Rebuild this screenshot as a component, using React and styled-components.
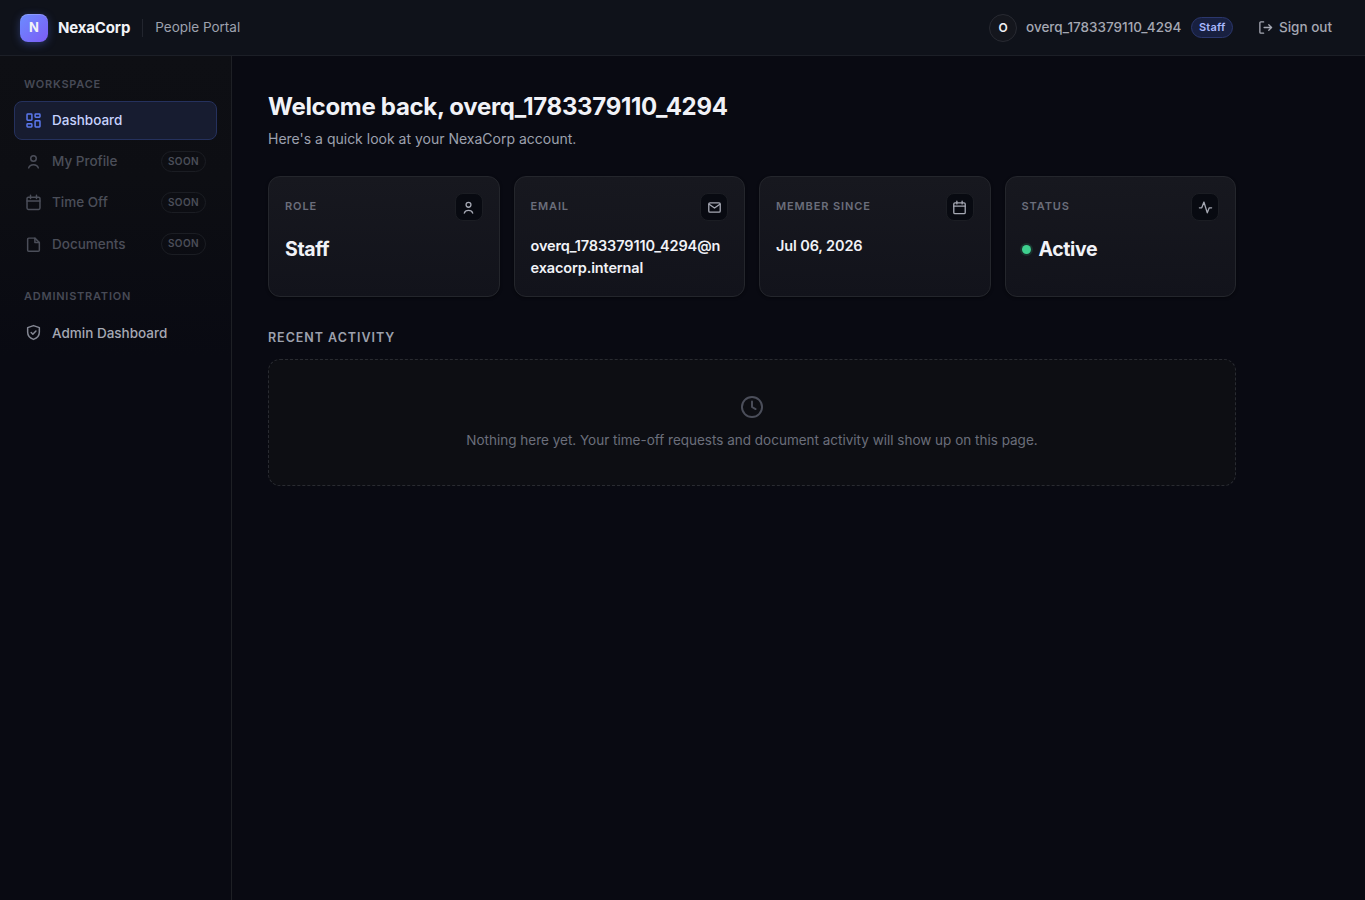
import React from 'react';
import styled, { createGlobalStyle, css } from 'styled-components';

const GlobalStyle = createGlobalStyle`
  * {
    box-sizing: border-box;
  }

  body {
    margin: 0;
    background: #090a12;
    color: #f1f2f7;
    font-family: Inter, 'Liberation Sans', sans-serif;
    font-size: 13.5px;
    line-height: 1.5;
    -webkit-font-smoothing: antialiased;
  }
`;

const Page = styled.div`
  display: flex;
  flex-direction: column;
  min-height: 100vh;
`;

const Topbar = styled.header`
  display: flex;
  align-items: center;
  justify-content: space-between;
  height: 56px;
  padding: 0 20px;
  background: #0f121a;
  border-bottom: 1px solid #1c1f27;
`;

const Brand = styled.div`
  display: flex;
  align-items: center;
  gap: 10px;
`;

const Logo = styled.div`
  display: flex;
  align-items: center;
  justify-content: center;
  width: 28px;
  height: 28px;
  border-radius: 8px;
  background: linear-gradient(135deg, #6b8cff, #7c5cf5);
  box-shadow: 0 2px 8px rgba(91, 124, 250, 0.35), inset 0 1px 0 rgba(255, 255, 255, 0.2);
  font-size: 13px;
  font-weight: 700;
`;

const BrandName = styled.span`
  padding-top: 1px;
  font-size: 15px;
  font-weight: 700;
  letter-spacing: -0.15px;
`;

const BrandSection = styled.span`
  margin-left: 2px;
  padding: 0 0 2px 12px;
  border-left: 1px solid #22252e;
  line-height: 16px;
  color: #9da1ae;
`;

const UserArea = styled.div`
  display: flex;
  align-items: center;
  gap: 10px;
  color: #a5a8b3;
`;

const Avatar = styled.div`
  display: flex;
  align-items: center;
  justify-content: center;
  width: 28px;
  height: 28px;
  margin-right: -1px;
  border: 1px solid #282a32;
  border-radius: 50%;
  background: #14161d;
  color: #f1f2f7;
  font-size: 12px;
  font-weight: 600;
`;

const UserName = styled.span`
  font-weight: 500;
`;

const RoleBadge = styled.span`
  padding: 2px 6.5px;
  border: 1px solid #2b376e;
  border-radius: 999px;
  background: #182040;
  color: #a9b8ff;
  font-size: 11px;
  font-weight: 600;
  line-height: 15px;
  letter-spacing: 0.2px;
`;

const SignOut = styled.a`
  display: flex;
  align-items: center;
  gap: 6px;
  margin-left: 2px;
  padding: 6px 12px;
  border: 1px solid transparent;
  font-weight: 500;
`;

const Body = styled.div`
  display: flex;
  flex: 1;
`;

const Sidebar = styled.nav`
  flex: none;
  width: 232px;
  padding: 20px 14px;
  border-right: 1px solid #1e2025;
  background: linear-gradient(180deg, #0e0f14 0, #0d0e13 120px, #090a12 300px);
`;

const NavLabel = styled.div`
  padding: 0 10px;
  margin: ${props => (props.$spaced ? '24px 0 9px' : '0 0 8px')};
  color: #474a56;
  font-size: 11px;
  font-weight: 600;
  letter-spacing: 0.77px;
`;

const NavList = styled.div`
  display: flex;
  flex-direction: column;
  gap: 2px;
`;

const NavItem = styled.a`
  display: flex;
  align-items: center;
  gap: 10px;
  min-height: 39px;
  padding: 8px 10px;
  border: 1px solid transparent;
  border-radius: 8px;
  color: #a5a8b3;
  font-weight: 500;

  svg {
    color: #858894;
  }

  ${props => props.$active && css`
    background: #171c30;
    border-color: #25315d;
    color: #c7d2fe;

    svg {
      color: #5b78ee;
    }
  `}

  ${props => props.$disabled && css`
    color: #4b4e59;

    svg {
      color: #4b4e59;
    }
  `}
`;

const SoonTag = styled.span`
  margin-left: auto;
  padding: 2px 6px;
  border: 1px solid #1b1d23;
  border-radius: 999px;
  font-size: 10px;
  font-weight: 600;
  line-height: 15.4px;
  letter-spacing: 0.4px;
`;

const Main = styled.main`
  flex: 1;
  max-width: 1040px;
  padding: 33px 36px;
`;

const Title = styled.h1`
  margin: 0 0 3px;
  font-size: 24px;
  font-weight: 700;
  line-height: 36px;
  letter-spacing: -0.3px;
`;

const Subtitle = styled.p`
  margin: 0 0 26px;
  color: #9da1ae;
  font-size: 14px;
  line-height: 22px;
`;

const Cards = styled.div`
  display: grid;
  grid-template-columns: repeat(4, 1fr);
  gap: 14px;
`;

const Card = styled.section`
  min-height: 121px;
  padding: 16px;
  border: 1px solid #24262c;
  border-radius: 12px;
  background: linear-gradient(180deg, #17181f, #12131b);
  box-shadow: 0 1px 3px rgba(0, 0, 0, 0.4);
`;

const CardHead = styled.div`
  display: flex;
  align-items: center;
  justify-content: space-between;
  margin-bottom: 14px;
`;

const CardLabel = styled.span`
  padding-bottom: 1px;
  color: #6b6e7b;
  font-size: 11px;
  font-weight: 600;
  letter-spacing: 0.88px;
`;

const IconBox = styled.span`
  display: flex;
  align-items: center;
  justify-content: center;
  width: 28px;
  height: 28px;
  border: 1px solid #1b1d23;
  border-radius: 8px;
  background: #080a11;
  color: #a5a8b3;
`;

const CardValue = styled.div`
  display: flex;
  align-items: center;
  gap: 8px;
  font-size: ${props => (props.$small ? '14.5px' : '19.5px')};
  font-weight: ${props => (props.$small ? 600 : 700)};
  line-height: ${props => (props.$small ? '22px' : '28px')};
  letter-spacing: ${props => (props.$small ? '-0.13px' : '-0.39px')};
  word-break: break-all;
`;

const StatusDot = styled.span`
  width: 9px;
  height: 9px;
  border-radius: 50%;
  background: #3ecf8e;
  box-shadow: 0 0 0 2px rgba(62, 207, 142, 0.15);
`;

const SectionTitle = styled.h2`
  margin: 31px 0 11px;
  color: #9da1ae;
  font-size: 12.5px;
  font-weight: 600;
  line-height: 20px;
  letter-spacing: 0.96px;
`;

const EmptyState = styled.div`
  display: flex;
  flex-direction: column;
  align-items: center;
  gap: 11px;
  height: 127px;
  padding-top: 35px;
  border: 1px dashed #292b31;
  border-radius: 12px;
  background: #0d0e13;
  color: #6b6e7b;

  svg {
    color: #4b4e5a;
  }
`;

const iconPaths = {
  dashboard: (
    <>
      <rect x="1.9" y="1.9" width="4.6" height="5.8" rx="0.7" />
      <rect x="9.5" y="1.9" width="4.6" height="3.1" rx="0.7" />
      <rect x="9.5" y="8.3" width="4.6" height="5.8" rx="0.7" />
      <rect x="1.9" y="11" width="4.6" height="3.1" rx="0.7" />
    </>
  ),
  user: (
    <>
      <circle cx="8" cy="5.1" r="2.6" />
      <path d="M3.5 14c.6-2 2.3-3 4.5-3s3.9 1 4.5 3" />
    </>
  ),
  calendar: (
    <>
      <rect x="1.9" y="3" width="12.2" height="11.5" rx="1.3" />
      <path d="M1.9 6.600h12.200M5.200 1.200v3M10.800 1.200v3" />
    </>
  ),
  file: (
    <>
      <path d="M9.300 2H3.500a1 1 0 0 0-1 1v10.300a1 1 0 0 0 1 1h9a1 1 0 0 0 1-1V6.200z" />
      <path d="M9.300 2v4.200h4.200" />
    </>
  ),
  shield: (
    <>
      <path d="M8 1.500l5.500 1.900v4.300c0 3.300-2.300 5.600-5.500 6.800-3.200-1.200-5.500-3.500-5.500-6.800V3.400z" />
      <path d="M5.800 8l1.600 1.600 2.900-3" />
    </>
  ),
  mail: (
    <>
      <rect x="1.900" y="3" width="12.200" height="10" rx="1.300" />
      <path d="M2.300 4.500L8 8.600l5.700-4.100" />
    </>
  ),
  activity: <path d="M1.500 8.300h2.500L6.300 2.200l3.600 11.500 2.100-5.400h2.500" />,
  signout: (
    <>
      <path d="M6 2H3a1 1 0 0 0-1 1v10a1 1 0 0 0 1 1h3" />
      <path d="M6.500 8h8M11.500 5l3 3-3 3" />
    </>
  ),
  clock: (
    <>
      <circle cx="8" cy="8" r="6.700" />
      <path d="M8 4.300V8l2.400 1.400" />
    </>
  )
};

const Icon = ({ name, size = 17, stroke = 1.4 }) => (
  <svg
    width={size}
    height={size}
    viewBox="0 0 16 16"
    fill="none"
    stroke="currentColor"
    strokeWidth={stroke}
    strokeLinecap="round"
    strokeLinejoin="round"
  >
    {iconPaths[name]}
  </svg>
);

const username = 'overq_1783379110_4294';

const workspaceLinks = [
  { label: 'Dashboard', icon: 'dashboard', active: true },
  { label: 'My Profile', icon: 'user', soon: true },
  { label: 'Time Off', icon: 'calendar', soon: true },
  { label: 'Documents', icon: 'file', soon: true }
];

const cards = [
  { label: 'ROLE', icon: 'user', value: 'Staff' },
  { label: 'EMAIL', icon: 'mail', value: `${username}@nexacorp.internal`, small: true },
  { label: 'MEMBER SINCE', icon: 'calendar', value: 'Jul 06, 2026', small: true },
  { label: 'STATUS', icon: 'activity', value: 'Active', dot: true }
];

const App = () => {
  return (
    <Page>
      <GlobalStyle />
      <Topbar>
        <Brand>
          <Logo>N</Logo>
          <BrandName>NexaCorp</BrandName>
          <BrandSection>People Portal</BrandSection>
        </Brand>
        <UserArea>
          <Avatar>O</Avatar>
          <UserName>{username}</UserName>
          <RoleBadge>Staff</RoleBadge>
          <SignOut>
            <Icon name="signout" size={15} />
            Sign out
          </SignOut>
        </UserArea>
      </Topbar>

      <Body>
        <Sidebar>
          <NavLabel>WORKSPACE</NavLabel>
          <NavList>
            {workspaceLinks.map(link => (
              <NavItem key={link.label} $active={link.active} $disabled={link.soon}>
                <Icon name={link.icon} />
                {link.label}
                {link.soon && <SoonTag>SOON</SoonTag>}
              </NavItem>
            ))}
          </NavList>
          <NavLabel $spaced>ADMINISTRATION</NavLabel>
          <NavList>
            <NavItem>
              <Icon name="shield" />
              Admin Dashboard
            </NavItem>
          </NavList>
        </Sidebar>

        <Main>
          <Title>Welcome back, {username}</Title>
          <Subtitle>Here's a quick look at your NexaCorp account.</Subtitle>

          <Cards>
            {cards.map(card => (
              <Card key={card.label}>
                <CardHead>
                  <CardLabel>{card.label}</CardLabel>
                  <IconBox>
                    <Icon name={card.icon} size={15} />
                  </IconBox>
                </CardHead>
                <CardValue $small={card.small}>
                  {card.dot && <StatusDot />}
                  {card.value}
                </CardValue>
              </Card>
            ))}
          </Cards>

          <SectionTitle>RECENT ACTIVITY</SectionTitle>
          <EmptyState>
            <Icon name="clock" size={24} stroke={1.3} />
            <span>Nothing here yet. Your time-off requests and document activity will show up on this page.</span>
          </EmptyState>
        </Main>
      </Body>
    </Page>
  );
};

export default App;
